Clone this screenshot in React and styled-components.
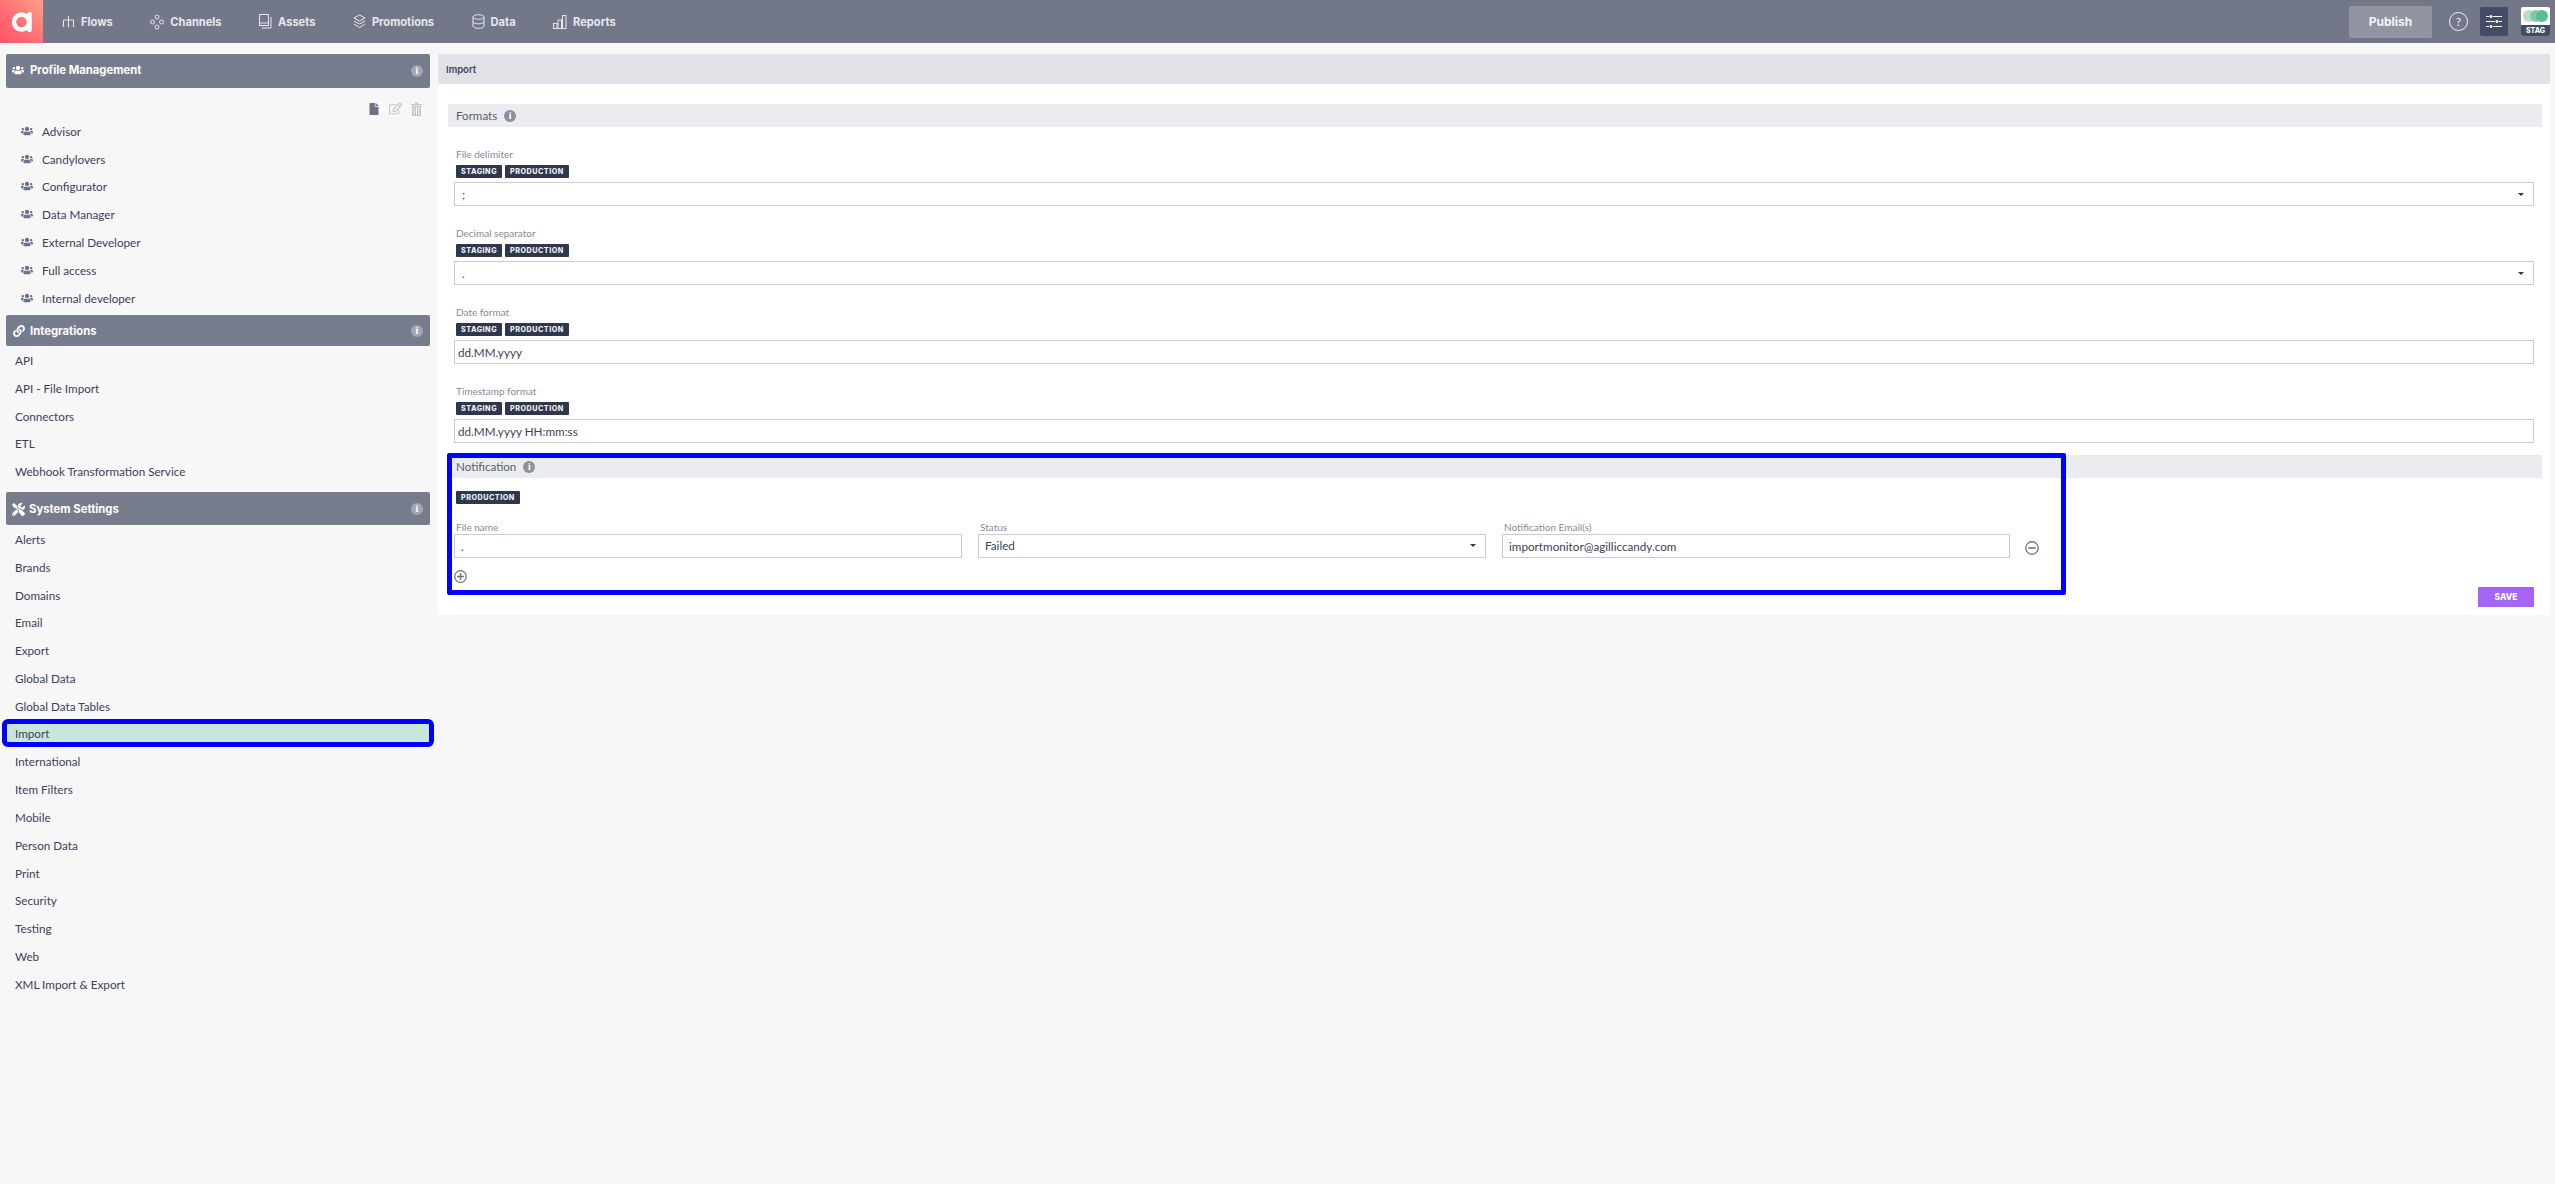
import React from "react";
import styled, { createGlobalStyle } from "styled-components";
import { FaUsers, FaLink, FaTools, FaFile, FaRegEdit } from "react-icons/fa";

const Global = createGlobalStyle`
  html, body { margin: 0; padding: 0; background: #f7f7f7; }
  body { font-family: "Lato", "Noto Sans", sans-serif; color: #3b4257; }
  * { box-sizing: border-box; }
`;

const Page = styled.div`width: 2555px; height: 1184px; overflow: hidden; background: #f7f7f7;`;

const TopBar = styled.header`height: 43px; background: #737889; display: flex; align-items: center;`;
const Logo = styled.div`
  width: 43px; height: 43px; flex: none;
  background: linear-gradient(45deg, #ff5168 0%, #ff6f74 45%, #ffa184 100%);
  display: flex; align-items: center; justify-content: center;
`;
const Nav = styled.nav`display: flex; align-items: center; margin-left: 19px; gap: 37.5px;`;
const NavItem = styled.a`
  display: flex; align-items: center; gap: 6px;
  font-family: "Inter", sans-serif; font-size: 11.1px; font-weight: 700;
  color: #e6e8ee;
  svg { flex: none; }
`;
const TopRight = styled.div`margin-left: auto; display: flex; align-items: center; padding-right: 5px;`;
const Publish = styled.button`
  width: 83px; height: 32px; border: 0; border-radius: 2px; background: #9195a3;
  color: #f4f5f8; font-family: "Inter", sans-serif; font-weight: 700; font-size: 12px;
`;
const Help = styled.div`
  width: 19px; height: 19px; margin-left: 17px; border: 1px solid #f1f2f5; border-radius: 50%;
  color: #f1f2f5; font-size: 12px; line-height: 17px; text-align: center;
`;
const SettingsBtn = styled.div`
  width: 28px; height: 29px; margin-left: 12px; background: #454c63; border-radius: 2px;
  display: flex; align-items: center; justify-content: center;
`;
const Env = styled.div`
  width: 29px; height: 29px; margin-left: 13px; border-radius: 2px; overflow: hidden;
  background: #fff; display: flex; flex-direction: column;
`;
const EnvTop = styled.div`height: 18px; display: flex; align-items: center; justify-content: center;`;
const EnvLabel = styled.div`
  flex: 1; background: #454c63; color: #fff; font-family: "Inter", sans-serif;
  font-size: 7px; font-weight: 800; line-height: 11px; text-align: center;
`;

const Body = styled.div`display: grid; grid-template-columns: 424px 2112px; column-gap: 8px; padding: 11px 0 0 6px; align-items: start;`;
const Sidebar = styled.aside`display: flex; flex-direction: column;`;
const PanelHead = styled.div`
  height: ${p => p.$h}px; margin-top: ${p => p.$mt || 0}px; background: #777c8d; border-radius: 2px; color: #fff;
  display: flex; align-items: center; padding: ${p => p.$pt || 0}px 7px ${p => p.$pb || 0}px ${p => p.$pl || 6}px;
  font-family: "Inter", sans-serif; font-size: 11.3px; font-weight: 700;
  svg { flex: none; margin-right: ${p => p.$gap || 5}px; }
`;
const InfoDot = styled.span`
  margin-left: ${p => p.$inline ? 0 : "auto"}; width: 12px; height: 12px; border-radius: 50%;
  background: ${p => p.$bg || "#a3a7b3"}; color: #fff;
  font-family: "Liberation Serif", serif; font-weight: 700; font-size: 10px;
  line-height: 12px; text-align: center; flex: none;
`;
const Tools = styled.div`
  height: 29px; display: flex; justify-content: flex-end; align-items: center; gap: 9px;
  padding: 12px 8px 0 0;
`;
const List = styled.div`display: flex; flex-direction: column;`;
const Row = styled.div`
  height: 27.8px; display: flex; align-items: center; gap: 9px;
  padding: ${p => p.$pt || 0}px 0 0 ${p => p.$pl || 9}px; font-size: 11.7px; color: #3b4257;
`;
const ActiveRow = styled(Row)`
  height: 17.8px; margin: 5px 0 5px 1px; width: 422px; padding: 0 0 0 8px;
  background: #c9e6da; outline: 5px solid #0000ff; border-radius: 1px;
`;

const Main = styled.main`background: #fff; height: 561px; display: flex; flex-direction: column; border-radius: 2px;`;
const MainHead = styled.div`
  height: 30px; background: #e1e2e7; border-radius: 2px; display: flex; align-items: center;
  padding-left: 8px; font-family: "Inter", sans-serif; font-size: 9.5px; font-weight: 600; color: #3b4257;
`;
const Content = styled.div`display: flex; flex-direction: column; padding: 20px 8px 0 10px;`;
const SectionBar = styled.div`
  height: 23px; background: #ebecf0; display: flex; align-items: center; gap: 7px;
  padding-left: 8px; font-size: 11.6px; color: #565c6d;
`;
const Field = styled.div`display: flex; flex-direction: column; height: 79px; padding: 21px 8px 0 6px;`;
const Label = styled.label`
  display: block; height: 13px; padding-left: 2px;
  font-size: 10px; line-height: 13px; color: #858a98;
`;
const Badges = styled.div`display: flex; gap: 3px; margin: ${p => p.$flush ? "0" : "4px"} 0 ${p => p.$flush ? "0" : "4px"} 2px;`;
const Badge = styled.span`
  height: 13px; padding: 0 5px; background: #2f374c; color: #eef0f4; border-radius: 1px;
  font-family: "Inter", sans-serif; font-size: 7.2px; font-weight: 800; letter-spacing: .5px; line-height: 13px;
`;
const Input = styled.div`
  height: 24px; border: 1px solid #cacad6; background: #fff; display: flex; align-items: center;
  padding: 0 6px ${p => p.$pb || 0}px ${p => p.$pl || 6}px; font-size: 11.7px; color: #3b4257;
`;
const Caret = styled.span`
  margin-left: auto; margin-right: 3px; width: 0; height: 0;
  border-left: 3px solid transparent; border-right: 3px solid transparent; border-top: 3px solid #2f374c;
`;
const Notice = styled.section`position: relative; margin-top: 12px;`;
const Highlight = styled.div`
  position: absolute; left: -1px; top: -2px; width: 1619px; height: 142px;
  border: 5px solid #0000ff; border-radius: 2px; pointer-events: none;
`;
const NoticeBody = styled.div`padding: 13px 8px 0 6px;`;
const Columns = styled.div`display: grid; grid-template-columns: 508px 508px 508px auto; column-gap: 16px; margin-top: 17px;`;
const Col = styled.div`display: flex; flex-direction: column;`;
const Minus = styled.div`display: flex; align-items: center; margin: 17px 0 0 -1px;`;
const Plus = styled.div`height: 13px; margin-top: 12px; display: flex;`;
const Footer = styled.div`display: flex; justify-content: flex-end; margin-top: 4px;`;
const Save = styled.button`
  width: 56px; height: 20px; border: 0; border-radius: 1px; background: #a564f5; color: #fff;
  font-family: "Inter", sans-serif; font-size: 8.5px; font-weight: 800;
`;

const S = { fill: "none", stroke: "#e6e8ee", strokeWidth: 1 };
const FlowsI = () => <svg width="13" height="13" viewBox="0 0 13 13" {...S}><path d="M6.5 1v4M1.5 11V5h10v6M6.5 5v6" /><circle cx="1.5" cy="11" r=".6" /><circle cx="6.5" cy="11" r=".6" /><circle cx="11.5" cy="11" r=".6" /></svg>;
const ChannelsI = () => <svg width="14" height="16" viewBox="0 0 14 16" {...S}><circle cx="7" cy="3" r="2" /><circle cx="7" cy="13" r="2" /><circle cx="2.5" cy="8" r="2" /><circle cx="11.5" cy="8" r="2" /></svg>;
const AssetsI = () => <svg width="13" height="15" viewBox="0 0 13 15" {...S}><rect x=".5" y=".5" width="9" height="11" /><path d="M.5 9h9M12 3v11H3" /></svg>;
const PromoI = () => <svg width="13" height="15" viewBox="0 0 13 15" {...S}><path d="M6.5 1 12 4 6.5 7 1 4zM1 7l5.5 3L12 7M1 10l5.5 3.5L12 10" /></svg>;
const DataI = () => <svg width="13" height="15" viewBox="0 0 13 15" {...S}><ellipse cx="6.5" cy="3" rx="5.5" ry="2.3" /><path d="M1 3v9c0 1.3 2.5 2.3 5.5 2.3S12 13.3 12 12V3M1 7.5c0 1.3 2.5 2.3 5.5 2.3S12 8.800 12 7.500" /></svg>;
const ReportsI = () => <svg width="14" height="14" viewBox="0 0 14 14" {...S}><rect x=".5" y="8.500" width="3.500" height="5" /><rect x="5" y="5" width="3.500" height="8.500" /><rect x="9.500" y=".5" width="3.500" height="13" /></svg>;
const TrashI = () => <svg width="11" height="14" viewBox="0 0 11 14" fill="#c3c6d0"><path d="M0 2h4V.5h3V2h4v1.300H0zM1 4h9v10H1z" /><path d="M3.200 5v8M5.500 5v8M7.800 5v8" stroke="#f7f7f7" /></svg>;
const RoundI = ({ plus, size = 13 }) => (
  <svg width={size} height={size} viewBox="0 0 13 13" fill="none" stroke="#6f7485" strokeWidth="1.200">
    <circle cx="6.500" cy="6.500" r="5.800" /><path d={plus ? "M3 6.500h7M6.500 3v7" : "M3 6.500h7"} strokeWidth="1.500" />
  </svg>
);
const Info = () => <InfoDot $inline $bg="#8b8f9e">i</InfoDot>;

const nav = [["Flows", FlowsI], ["Channels", ChannelsI], ["Assets", AssetsI], ["Promotions", PromoI], ["Data", DataI], ["Reports", ReportsI]];
const profiles = ["Advisor", "Candylovers", "Configurator", "Data Manager", "External Developer", "Full access", "Internal developer"];
const integrations = ["API", "API - File Import", "Connectors", "ETL", "Webhook Transformation Service"];
const system = ["Alerts", "Brands", "Domains", "Email", "Export", "Global Data", "Global Data Tables", "Import", "International", "Item Filters", "Mobile", "Person Data", "Print", "Security", "Testing", "Web", "XML Import & Export"];
const fields = [["File delimiter", ";", true], ["Decimal separator", ".", true], ["Date format", "dd.MM.yyyy", false], ["Timestamp format", "dd.MM.yyyy HH:mm:ss", false]];

export default function App() {
  return (
    <Page>
      <Global />
      <TopBar>
        <Logo>
          <svg width="22" height="22" viewBox="0 0 22 22" fill="none" stroke="#fff" strokeWidth="4.500"><circle cx="10.500" cy="11" r="7.500" /><path d="M18.500 3v16" strokeLinecap="round" /></svg>
        </Logo>
        <Nav>
          {nav.map(([t, I]) => <NavItem key={t}><I />{t}</NavItem>)}
        </Nav>
        <TopRight>
          <Publish>Publish</Publish>
          <Help>?</Help>
          <SettingsBtn>
            <svg width="17" height="13" viewBox="0 0 17 13" fill="#fff" stroke="#fff"><path d="M0 1.500h3M7 1.500h9M0 6.500h9M13 6.500h3M0 11.500h3M7 11.500h9" strokeWidth="1" /><circle cx="5" cy="1.500" r="1" /><circle cx="11" cy="6.500" r="1" /><circle cx="5" cy="11.500" r="1" /></svg>
          </SettingsBtn>
          <Env>
            <EnvTop>
              <svg width="25" height="12" viewBox="0 0 25 12"><circle cx="6" cy="6" r="6" fill="#b4e0cd" /><circle cx="13" cy="6" r="6" fill="#7fcaa9" /><circle cx="19" cy="6" r="6" fill="#55bf92" /></svg>
            </EnvTop>
            <EnvLabel>STAG</EnvLabel>
          </Env>
        </TopRight>
      </TopBar>
      <Body>
        <Sidebar>
          <PanelHead $h={34} $pl={6} $gap={6} $pb={3}><FaUsers size={12} />Profile Management<InfoDot style={{ marginTop: 3 }}>i</InfoDot></PanelHead>
          <Tools><FaFile size={12} color="#6d7286" /><FaRegEdit size={13} color="#c3c6d0" /><TrashI /></Tools>
          <List>
            {profiles.map(p => <Row key={p} $pl={15}><FaUsers size={12} color="#6d7286" />{p}</Row>)}
          </List>
          <PanelHead $h={31} $mt={3} $pl={7} $gap={5} $pt={1}><FaLink size={12} />Integrations<InfoDot>i</InfoDot></PanelHead>
          <List>
            {integrations.map(p => <Row key={p} $pt={1}>{p}</Row>)}
          </List>
          <PanelHead $h={33} $mt={7} $gap={4} $pt={2}><FaTools size={13} />System Settings<InfoDot>i</InfoDot></PanelHead>
          <List>
            {system.map(p => p === "Import" ? <ActiveRow key={p}>{p}</ActiveRow> : <Row key={p} $pt={1}>{p}</Row>)}
          </List>
        </Sidebar>
        <Main>
          <MainHead>Import</MainHead>
          <Content>
            <SectionBar>Formats<Info /></SectionBar>
            {fields.map(([l, v, sel]) => (
              <Field key={l}>
                <Label>{l}</Label>
                <Badges><Badge>STAGING</Badge><Badge>PRODUCTION</Badge></Badges>
                <Input $pl={sel ? 7 : 3}>{v}{sel && <Caret />}</Input>
              </Field>
            ))}
            <Notice>
              <SectionBar>Notification<Info /></SectionBar>
              <NoticeBody>
                <Badges $flush><Badge>PRODUCTION</Badge></Badges>
                <Columns>
                  <Col><Label>File name</Label><Input>.</Input></Col>
                  <Col><Label>Status</Label><Input $pb={2}>Failed<Caret /></Input></Col>
                  <Col><Label>Notification Email(s)</Label><Input>importmonitor@agilliccandy.com</Input></Col>
                  <Minus><RoundI size={14} /></Minus>
                </Columns>
                <Plus><RoundI plus /></Plus>
                <Footer><Save>SAVE</Save></Footer>
              </NoticeBody>
              <Highlight />
            </Notice>
          </Content>
        </Main>
      </Body>
    </Page>
  );
}
